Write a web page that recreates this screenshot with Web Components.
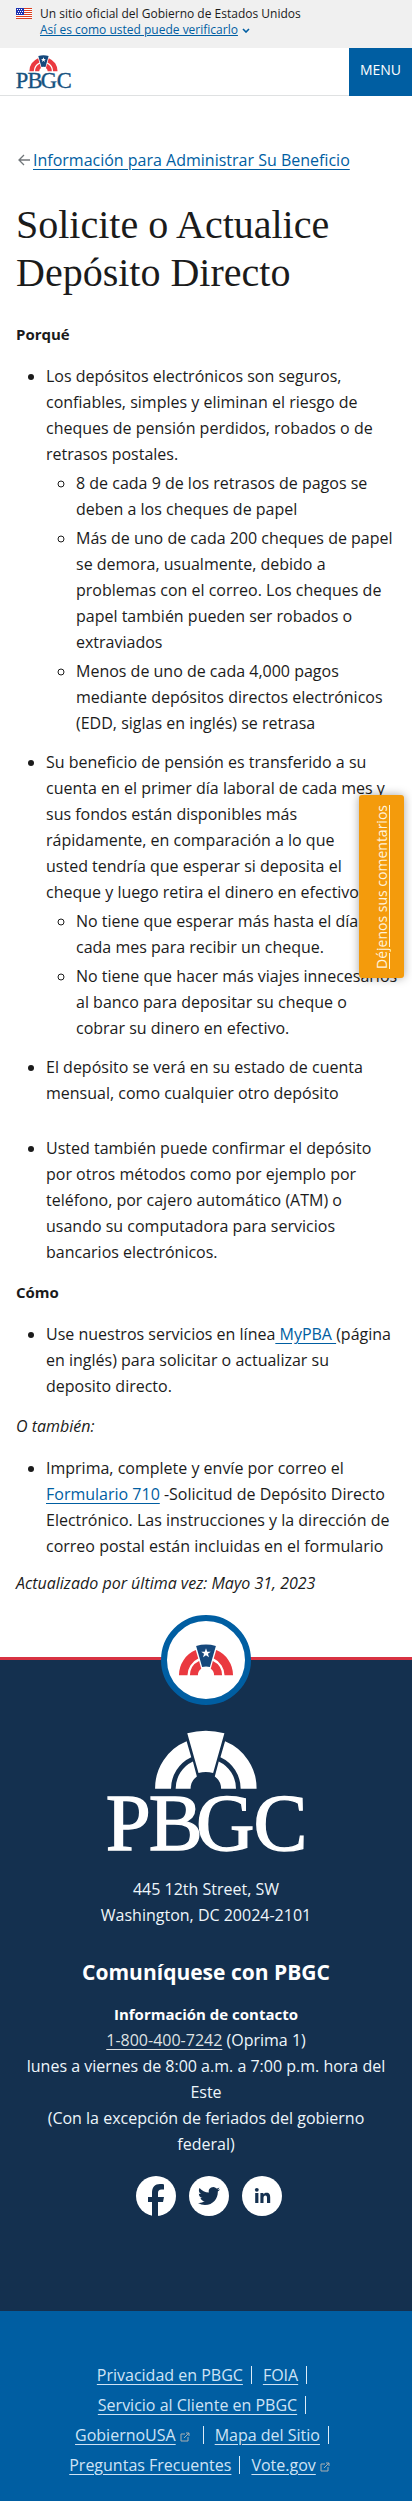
<!DOCTYPE html>
<html lang="es">
<head>
<meta charset="utf-8">
<meta name="viewport" content="width=device-width, initial-scale=1">
<title>Solicite o Actualice Depósito Directo | PBGC</title>
<style>
body{margin:0;background:#fff;color:#1b1b1b;font:16px/26px "Open Sans","Noto Sans",sans-serif;position:relative}
</style>
</head>
<body>
<gov-banner></gov-banner>
<site-header></site-header>
<article-page>
  <a slot="crumb" href="#beneficio">Información para Administrar Su Beneficio</a>
  <span slot="title">Solicite o Actualice Depósito Directo</span>
</article-page>
<contact-footer></contact-footer>
<footer-links></footer-links>
<feedback-tab>Déjenos sus comentarios</feedback-tab>

<script>
const define = (name, html) => {
  const tpl = document.createElement('template');
  tpl.innerHTML = html;
  customElements.define(name, class extends HTMLElement {
    constructor() {
      super();
      this.attachShadow({mode: 'open'}).append(tpl.content.cloneNode(true));
    }
  });
};

const arch = `
  <g class="arch">
    <path d="M195 565A153 153 0 0 1 290 422L304 470A105 105 0 0 0 243 565Z"/>
    <path d="M257 565A91 91 0 0 1 309 483L321 528A46 46 0 0 0 302 565Z"/>
    <path d="M501 565A153 153 0 0 0 406 422L392 470A105 105 0 0 1 453 565Z"/>
    <path d="M439 565A91 91 0 0 0 387 483L375 528A46 46 0 0 1 394 565Z"/>
  </g>
  <path class="key" d="M292 398Q348 382 404 398L370 518Q348 512 326 518Z"/>
  <path class="star" d="M348 412l7 19h20l-16 12 6 20-17-12-17 12 6-20-16-12h20z"/>`;

/* Full logo: arch over the letters. Colours come from custom properties. */
define('pbgc-logo', `
<style>
:host{display:block}
svg{display:block;width:100%;height:auto;overflow:visible}
.arch{fill:var(--arch,#fff)}
.key{fill:var(--key,#fff)}
.star{fill:var(--star,none)}
text{font:244px "Liberation Serif",serif;fill:var(--letters,#fff);stroke:var(--letters,#fff);stroke-width:4}
</style>
<svg viewBox="50 388 597 370" role="img" aria-label="PBGC">${arch}
  <text y="750" x="46 176 318 492">PBGC</text>
</svg>`);

define('arch-badge', `
<style>
:host{display:grid;place-items:center;box-sizing:border-box;width:90px;height:90px;border:6px solid #005ea2;border-radius:50%;background:#fff}
svg{display:block;width:54px;height:32px}
.arch{fill:#ea3940}
.key{fill:#15487c}
.star{fill:#fff}
</style>
<svg viewBox="195 388 306 180" aria-hidden="true">${arch}</svg>`);

define('gov-banner', `
<style>
:host{display:block;background:#f0f0f0;font-size:12px;line-height:16px}
section{display:flex;gap:8px;padding:6px 16px 10px}
.flag{flex:none;width:16px;height:11px;margin-top:2px}
p{margin:0}
button{display:inline-flex;align-items:center;gap:4px;padding:0;border:0;background:none;color:#005ea2;font:inherit;cursor:pointer}
.label{text-decoration:underline}
</style>
<section aria-label="Sitio oficial del gobierno">
  <svg class="flag" viewBox="0 0 16 11" aria-hidden="true">
    <path fill="#fff" d="M0 0h16v11H0z"/>
    <path stroke="#db3e1f" d="M0 .5h16M0 2.5h16M0 4.5h16M0 6.5h16M0 8.5h16M0 10.5h16"/>
    <path fill="#1e33b1" d="M0 0h8v7H0z"/>
    <path stroke="#fff" stroke-dasharray="1 1" d="M1 1.5h6M2 3.5h5M1 5.5h6"/>
  </svg>
  <div>
    <p>Un sitio oficial del Gobierno de Estados Unidos</p>
    <button type="button" aria-expanded="false"><span class="label">Así es como usted puede verificarlo</span><svg width="8" height="5" viewBox="0 0 8 5" aria-hidden="true"><path d="M1 1l3 3 3-3" fill="none" stroke="#005ea2" stroke-width="1.6"/></svg></button>
  </div>
</section>`);

define('site-header', `
<style>
:host{display:block}
header{display:flex;justify-content:space-between;height:48px;box-sizing:border-box;border-bottom:1px solid #dfe1e2}
a{display:block;padding:7px 16px}
pbgc-logo{width:55px;--arch:#ea3940;--key:#15487c;--star:#fff;--letters:#16527f}
button{width:63px;height:48px;padding:0 0 4px;border:0;background:#005ea2;color:#fff;font:14px/20px "Open Sans",sans-serif;cursor:pointer}
</style>
<header><a href="#inicio" aria-label="Inicio"><pbgc-logo></pbgc-logo></a><button type="button">MENU</button></header>`);

define('article-page', `
<style>
:host{display:block}
main{padding:51px 16px 61px}
a,::slotted(a){color:#005ea2;text-underline-offset:3px}
nav{display:flex;align-items:center;gap:3px;padding-left:2px}
h1{margin:28px 0 24px;font:40px/48px "Liberation Serif",serif}
h2{margin:0;font-size:15px;line-height:26px;font-weight:700}
p{margin:0}
ul{margin:16px 0 14px;padding-left:30px}
ul ul{margin:3px -8px 13px 0}
li+li{margin-top:3px}
.spaced{padding-bottom:26px}
.last{margin-bottom:11px}
</style>
<main>
  <nav aria-label="Ruta"><svg width="12" height="12" viewBox="0 0 12 12" aria-hidden="true"><path d="M12 6H1M6 1L1 6l5 5" fill="none" stroke="#71767a" stroke-width="1.3"/></svg><slot name="crumb"></slot></nav>
  <h1><slot name="title"></slot></h1>
  <h2>Porqué</h2>
  <ul>
    <li>Los depósitos electrónicos son seguros, confiables, simples y eliminan el riesgo de cheques de pensión perdidos, robados o de retrasos postales.
      <ul>
        <li>8 de cada 9 de los retrasos de pagos se deben a los cheques de papel</li>
        <li>Más de uno de cada 200 cheques de papel se demora, usualmente, debido a problemas con el correo. Los cheques de papel también pueden ser robados o extraviados</li>
        <li>Menos de uno de cada 4,000 pagos mediante depósitos directos electrónicos (EDD, siglas en inglés) se retrasa</li>
      </ul>
    </li>
    <li>Su beneficio de pensión es transferido a su cuenta en el primer día laboral de cada mes y sus fondos están disponibles más rápidamente, en comparación a lo que usted&nbsp;tendría que esperar si deposita el cheque y luego retira el dinero en efectivo.
      <ul>
        <li>No tiene que esperar más hasta el día de cada mes para recibir un cheque.</li>
        <li>No tiene que hacer más viajes innecesarios al banco para depositar su cheque o cobrar&nbsp;su dinero en efectivo.</li>
      </ul>
    </li>
    <li class="spaced">El depósito se verá en su estado de cuenta mensual, como cualquier otro depósito</li>
    <li>Usted también puede confirmar el depósito por otros métodos como por ejemplo por teléfono, por cajero automático (ATM) o usando su computadora para servicios bancarios electrónicos.</li>
  </ul>
  <h2>Cómo</h2>
  <ul>
    <li>Use nuestros servicios en línea<a href="#mypba"> MyPBA </a>(página en inglés) para solicitar o actualizar su deposito directo.</li>
  </ul>
  <p><em>O también:</em></p>
  <ul class="last">
    <li>Imprima, complete y envíe por correo el <a href="#formulario-710">Formulario 710</a> -Solicitud de Depósito Directo Electrónico. Las instrucciones y la dirección de correo postal están incluidas en el formulario</li>
  </ul>
  <p><em>Actualizado por última vez: Mayo 31, 2023</em></p>
</main>`);

define('contact-footer', `
<style>
:host{display:block;position:relative;border-top:3px solid #d83242;background:#14304f;color:#eef6fb;text-align:center}
arch-badge{position:absolute;left:50%;top:0;transform:translate(-50%,-50%)}
footer{display:flex;flex-direction:column;align-items:center;padding:70px 24px 95px}
pbgc-logo{width:198px}
address{margin-top:23px;font-style:normal}
h2{margin:29px 0 14px;font-size:21px;line-height:30px;font-weight:700;color:#fff}
h3{margin:0;font-size:15px;line-height:26px;font-weight:700;color:#fff}
p{margin:0}
p a{color:#dfe1e2;text-underline-offset:3px}
nav{display:flex;gap:13px;margin-top:19px;padding-left:6px}
nav a,nav svg{display:block}
</style>
<arch-badge></arch-badge>
<footer>
  <pbgc-logo></pbgc-logo>
  <address>445 12th Street, SW<br>Washington, DC 20024-2101</address>
  <h2>Comuníquese con PBGC</h2>
  <h3>Información de contacto</h3>
  <p><a href="tel:1-800-400-7242">1-800-400-7242</a> (Oprima 1)</p>
  <p>lunes a viernes de 8:00 a.m. a 7:00 p.m. hora del Este</p>
  <p>(Con la excepción de feriados del gobierno federal)</p>
  <nav aria-label="Redes sociales">
    <a href="#facebook" aria-label="Facebook"><svg width="40" height="40" viewBox="0 0 40 40"><circle cx="20" cy="20" r="20" fill="#fff"/><path fill="#14304f" d="M16 40V26h-4v-5h4v-4c0-6 3-9 8-9 2 0 3 0 4 .4v5h-2.500c-2.500 0-3.500 1.200-3.500 3.600v4h6l-1 5h-5v14z"/></svg></a>
    <a href="#twitter" aria-label="Twitter"><svg width="40" height="40" viewBox="0 0 40 40"><circle cx="20" cy="20" r="20" fill="#fff"/><path fill="#14304f" transform="translate(9 9)scale(.92)" d="M23.950 4.570a10 10 0 0 1-2.820.770 4.960 4.960 0 0 0 2.160-2.720c-.950.550-2 .960-3.130 1.180a4.920 4.920 0 0 0-8.380 4.480C7.690 8.090 4.070 6.130 1.640 3.160a4.820 4.820 0 0 0-.670 2.480c0 1.710.870 3.210 2.190 4.100a4.900 4.900 0 0 1-2.230-.620v.060a4.920 4.920 0 0 0 3.950 4.830 5 5 0 0 1-2.210.080 4.940 4.940 0 0 0 4.600 3.420A9.870 9.870 0 0 1 0 19.540a13.990 13.990 0 0 0 7.550 2.210c9.050 0 14-7.500 14-13.980 0-.210 0-.420-.020-.630a9.940 9.940 0 0 0 2.460-2.550z"/></svg></a>
    <a href="#linkedin" aria-label="LinkedIn"><svg width="40" height="40" viewBox="0 0 40 40"><circle cx="20" cy="20" r="20" fill="#fff"/><g fill="#14304f"><circle cx="14.800" cy="13.800" r="1.900"/><path d="M13.200 17h3.200v10h-3.200zM18.400 17h3v1.400c.600-1 1.700-1.700 3.100-1.700 2.900 0 3.700 1.900 3.700 4.700V27H25v-5c0-1.500-.300-2.600-1.600-2.600s-1.900 1-1.900 2.500V27h-3.100z"/></g></svg></a>
  </nav>
</footer>`);

const ext = `<svg width="10" height="10" viewBox="0 0 10 10" aria-hidden="true"><path d="M5 2H1v7h7V5M6 1h3v3M9 1L4 6" fill="none" stroke="#a9aeb1"/></svg>`;

define('footer-links', `
<style>
:host{display:block;background:#005ea2}
ul{display:flex;flex-wrap:wrap;justify-content:center;column-gap:11px;margin:0;padding:49px 52px 22px 44px;list-style:none;line-height:30px}
li{display:flex;align-items:center}
li:not(:last-child)::after{content:"";width:1px;height:18px;margin-left:8px;background:#dcebf7}
a{color:#cfe3f5;text-underline-offset:3px}
svg{margin:4px 5px 0 4px}
</style>
<ul>
  <li><a href="#privacidad">Privacidad en PBGC</a></li>
  <li><a href="#foia">FOIA</a></li>
  <li><a href="#servicio">Servicio al Cliente en PBGC</a></li>
  <li><a href="#gobiernousa">GobiernoUSA</a>${ext}</li>
  <li><a href="#mapa">Mapa del Sitio</a></li>
  <li><a href="#preguntas">Preguntas Frecuentes</a></li>
  <li><a href="#vote">Vote.gov</a>${ext}</li>
</ul>`);

define('feedback-tab', `
<style>
:host{position:absolute;right:8px;top:795px}
a{display:flex;align-items:center;justify-content:center;box-sizing:border-box;width:45px;height:183px;border-radius:3px;background:#f49b0c;box-shadow:0 0 10px rgba(0,0,0,.35);color:#fff3dc;font-size:14px;line-height:20px;text-decoration:underline}
span{writing-mode:vertical-rl;transform:rotate(180deg)}
</style>
<a href="#comentarios"><span><slot></slot></span></a>`);
</script>
</body>
</html>
